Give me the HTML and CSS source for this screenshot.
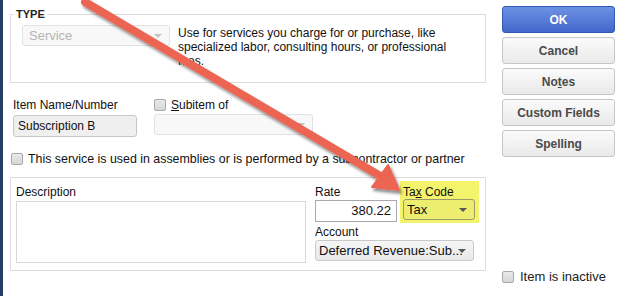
FILE: index.html
```html
<!DOCTYPE html>
<html lang="en">
<head>
  <meta charset="UTF-8" />
  <title>New Item</title>
  <link rel="stylesheet" href="styles.css">
</head>
<body>

  <div class="window">
    <div class="main">

      <fieldset class="type-group">
        <legend>TYPE</legend>
        <div class="type-row">
          <div class="select disabled type-select">Service<span class="caret"></span></div>
          <p class="type-help">Use for services you charge for or purchase, like<br>specialized labor, consulting hours, or professional<br>fees.</p>
        </div>
      </fieldset>

      <div class="name-row">
        <div class="field">
          <label class="label">Item Name/Number</label>
          <div class="input name-input">Subscription B</div>
        </div>
        <div class="field">
          <label class="check"><span class="box"></span><span><u>S</u>ubitem of</span></label>
          <div class="select disabled subitem-select"><span class="caret"></span></div>
        </div>
      </div>

      <label class="check assembly">
        <span class="box"></span><span>This service is used in assemblies or is performed by a subcontractor or partner</span>
      </label>

      <div class="detail-group">
        <div class="field desc-field">
          <label class="label">Description</label>
          <div class="textarea"></div>
        </div>
        <div class="price-col">
          <div class="price-row">
            <div class="field">
              <label class="label">Rate</label>
              <div class="input rate-input">380.22</div>
            </div>
            <div class="field highlight">
              <label class="label">Ta<u>x</u> Code</label>
              <div class="select tax-select">Tax<span class="caret"></span></div>
            </div>
          </div>
          <div class="field">
            <label class="label">Account</label>
            <div class="select account-select">Deferred Revenue:Sub...<span class="caret"></span></div>
          </div>
        </div>
      </div>
    </div>

    <div class="side">
      <button class="btn primary">OK</button>
      <button class="btn">Cancel</button>
      <button class="btn">No<u>t</u>es</button>
      <button class="btn">Custom Fields</button>
      <button class="btn">Spellin<u>g</u></button>

      <label class="check inactive"><span class="box"></span><span>Item is inactive</span></label>
    </div>
  </div>

  <!-- callout arrow drawn over the dialog -->
  <svg class="callout" width="619" height="296" viewBox="0 0 619 296">
    <defs>
      <filter id="shadow" x="-10%" y="-10%" width="130%" height="130%">
        <feDropShadow dx="2" dy="3" stdDeviation="1.5" flood-color="#000" flood-opacity="0.45"/>
      </filter>
    </defs>
    <g filter="url(#shadow)" fill="#ec6552" stroke="#ec6552">
      <line x1="85" y1="2" x2="382" y2="177" stroke-width="8" stroke-linecap="round"/>
      <polygon points="399,190 372,187 388,165" stroke-width="2" stroke-linejoin="round"/>
    </g>
  </svg>

</body>
</html>
```

FILE: styles.css
```css
* {
  box-sizing: border-box;
}

body {
  margin: 0;
  width: 619px;
  height: 296px;
  overflow: hidden;
  background: #ffffff;
  font-family: 'Liberation Sans', Arial, sans-serif;
  font-size: 12px;
  color: #111;
}

.window {
  display: flex;
  height: 296px;
  border-left: 3px solid #243f63;
}

.main {
  width: 499px;
  padding: 0 0 0 7px;
}

/* TYPE group */
.type-group {
  margin: 8px 0 0 0;
  width: 476px;
  height: 75px;
  padding: 4px 0 0 11px;
  border: 1px solid #dcdcdc;
}

.type-group legend {
  margin-left: -8px;
  padding: 0 2px;
  font-size: 11px;
  font-weight: bold;
  color: #222;
  line-height: 13px;
}

.type-row {
  display: flex;
  gap: 8px;
}

.type-help {
  margin: 1px 0 0 0;
  line-height: 14px;
  color: #111;
}

/* inputs */
.select {
  position: relative;
  height: 21px;
  line-height: 19px;
  padding: 0 6px;
  border: 1px solid #c9c9c9;
  border-radius: 3px;
  background: linear-gradient(#f6f6f6, #e9e9e9);
  color: #111;
  white-space: nowrap;
}

.select .caret {
  position: absolute;
  right: 7px;
  top: 8px;
  border-left: 4px solid transparent;
  border-right: 4px solid transparent;
  border-top: 4px solid #555;
}

.select.disabled {
  background: #f8f8f8;
  border-color: #e2e2e2;
  color: #b4b4b4;
  font-size: 13px;
}

.select.disabled .caret {
  border-top-color: #c4c4c4;
}

.type-select {
  width: 148px;
}

.input {
  height: 22px;
  line-height: 20px;
  padding: 0 4px;
  border: 1px solid #a9a9a9;
  background: #fff;
}

.label {
  display: block;
  line-height: 14px;
  height: 14px;
}

/* name row */
.name-row {
  display: flex;
  gap: 17px;
  margin-top: 15px;
  margin-left: 3px;
}

.field {
  display: flex;
  flex-direction: column;
}

.name-row .label {
  margin-bottom: 3px;
}

.name-input {
  width: 124px;
  background: #efefef;
  border-color: #c6c6c6;
  border-radius: 3px;
}

.subitem-select {
  width: 159px;
  margin-top: 2px;
}

/* checkboxes */
.check {
  display: flex;
  align-items: center;
  gap: 5px;
  height: 14px;
  line-height: 14px;
}

.box {
  width: 12px;
  height: 12px;
  border: 1px solid #a8a8a8;
  border-radius: 2px;
  background: linear-gradient(#e9e9e9, #d6d6d6);
  flex-shrink: 0;
}

.assembly {
  margin: 15px 0 0 1px;
  font-size: 12.4px;
}

/* detail group */
.detail-group {
  display: flex;
  gap: 9px;
  width: 476px;
  height: 94px;
  margin-top: 11px;
  padding: 7px 0 0 5px;
  border: 1px solid #dcdcdc;
}

.textarea {
  width: 290px;
  height: 62px;
  margin-top: 2px;
  border: 1px solid #d9d9d9;
}

.price-col {
  display: flex;
  flex-direction: column;
}

.price-row {
  display: flex;
  gap: 3px;
}

.rate-input {
  width: 82px;
  margin-top: 1px;
  text-align: right;
  font-size: 13px;
  padding-right: 5px;
}

.highlight {
  margin-top: -4px;
  padding: 4px 4px 3px 3px;
  background: #f4f46c;
}

.tax-select {
  width: 72px;
  margin-top: 0;
  background: #eded6f;
  border-color: #9a9a6a;
  font-size: 13px;
  padding-left: 3px;
}

.price-col > .field {
  margin-top: 2px;
}

.account-select {
  width: 159px;
  margin-top: 1px;
  font-size: 13px;
  padding-left: 3px;
}

/* side buttons */
.side {
  display: flex;
  flex-direction: column;
  gap: 4px;
  padding-top: 6px;
}

.btn {
  width: 113px;
  height: 27px;
  border: 1px solid #c6c6c6;
  border-radius: 3px;
  background: linear-gradient(#fbfbfb, #e9e9e9);
  font-family: 'Liberation Sans', Arial, sans-serif;
  font-size: 12px;
  font-weight: bold;
  color: #4a4a4a;
  padding: 0;
}

.btn.primary {
  background: linear-gradient(#6c92e4, #4466cc);
  border-color: #3558b0;
  color: #ffffff;
}

.inactive {
  margin-top: 109px;
  margin-left: 0;
  gap: 6px;
  font-size: 13px;
  color: #222;
}

.callout {
  position: absolute;
  left: 0;
  top: 0;
  pointer-events: none;
}
```
